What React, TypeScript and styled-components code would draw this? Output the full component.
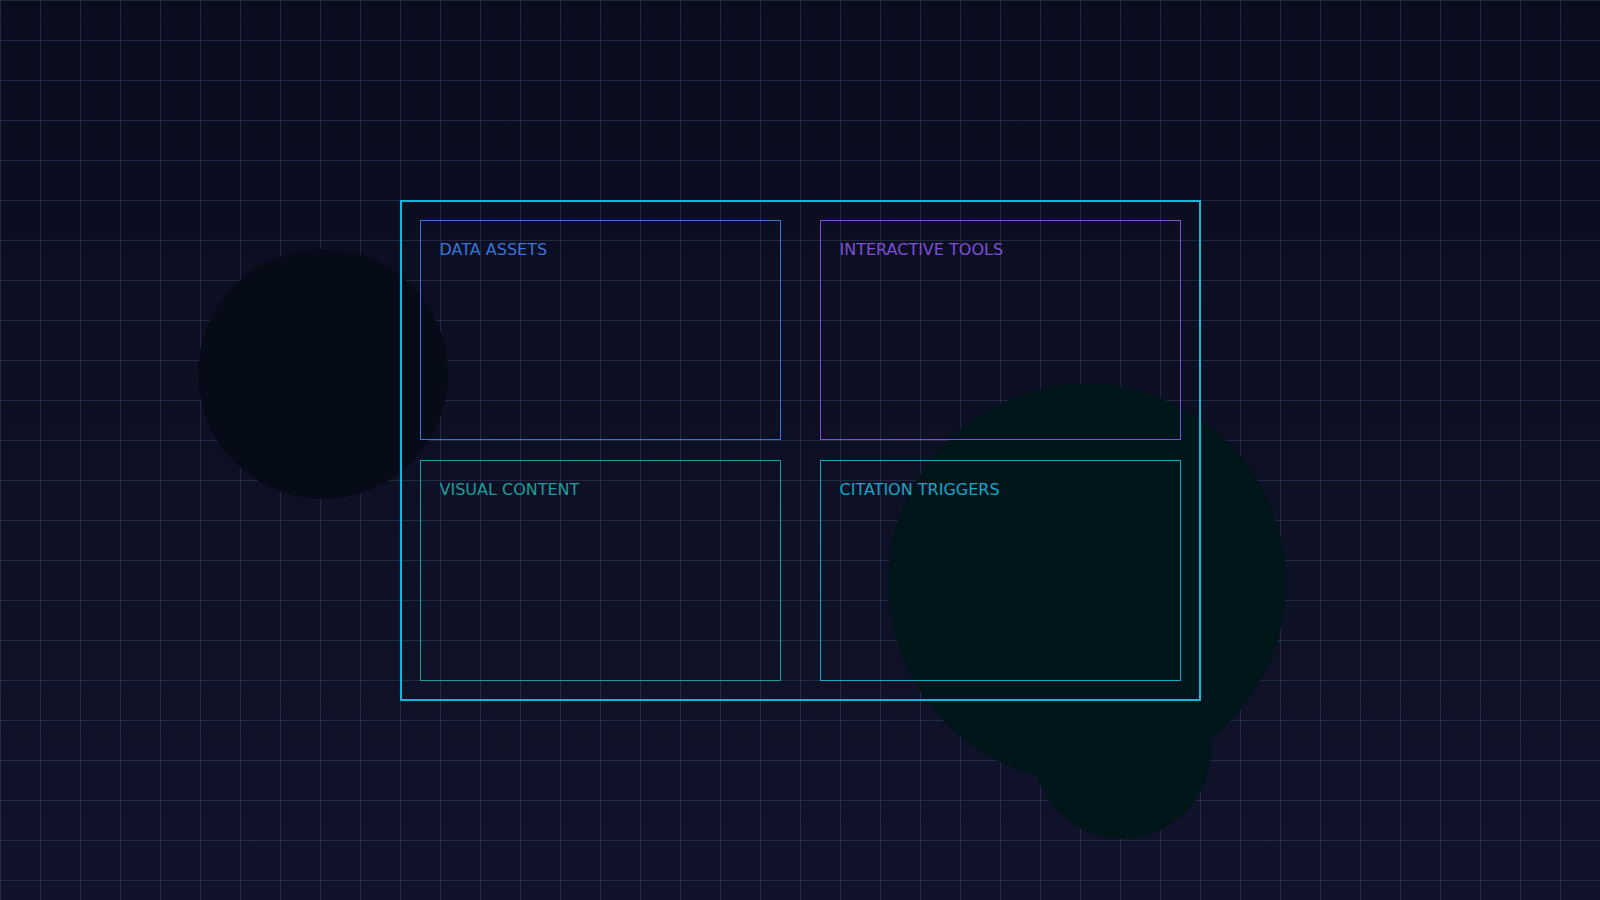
import React from "react";
import styled, { createGlobalStyle } from "styled-components";

const Global = createGlobalStyle`
  html, body { margin: 0; padding: 0; }
  body { font-family: "DejaVu Sans", sans-serif; }
`;

const Page = styled.div`
  position: relative;
  width: 1600px;
  height: 900px;
  overflow: hidden;
  background: linear-gradient(180deg, #0a0d1d 0%, #11132b 100%);
  display: flex;
  align-items: center;
  justify-content: center;
`;

const Grid = styled.div`
  position: absolute;
  inset: 0;
  background-image:
    linear-gradient(to right, rgba(60, 80, 115, 0.4) 1px, transparent 1px),
    linear-gradient(to bottom, rgba(60, 80, 115, 0.4) 1px, transparent 1px);
  background-size: 40px 40px;
`;

const Blob = styled.div<{ $x: number; $y: number; $r: number; $c: string }>`
  position: absolute;
  left: ${(p) => p.$x - p.$r}px;
  top: ${(p) => p.$y - p.$r}px;
  width: ${(p) => p.$r * 2}px;
  height: ${(p) => p.$r * 2}px;
  border-radius: 50%;
  background: ${(p) => p.$c};
`;

const Frame = styled.div`
  position: relative;
  width: 801px;
  height: 501px;
  box-sizing: border-box;
  border: 2px solid #10b6dc;
  padding: 18px;
  display: grid;
  grid-template-columns: 1fr 1fr;
  grid-template-rows: 1fr 1fr;
  gap: 20px 39px;
`;

const Panel = styled.div<{ $c: string }>`
  border: 1px solid ${(p) => p.$c};
  padding: 20px 19px;
  color: ${(p) => p.$c};
  font-size: 16px;
  line-height: 18px;
`;

export default function App() {
  return (
    <Page>
      <Global />
      <Grid />
      <Blob $x={323} $y={374} $r={125} $c="#050c18" />
      <Blob $x={1122} $y={750} $r={89} $c="#01161a" />
      <Blob $x={1087} $y={583} $r={199} $c="#01161a" />
      <Frame>
        <Panel $c="#3a73d8">DATA ASSETS</Panel>
        <Panel $c="#7d4fd6">INTERACTIVE TOOLS</Panel>
        <Panel $c="#1a9e9c">VISUAL CONTENT</Panel>
        <Panel $c="#13a6c7">CITATION TRIGGERS</Panel>
      </Frame>
    </Page>
  );
}
